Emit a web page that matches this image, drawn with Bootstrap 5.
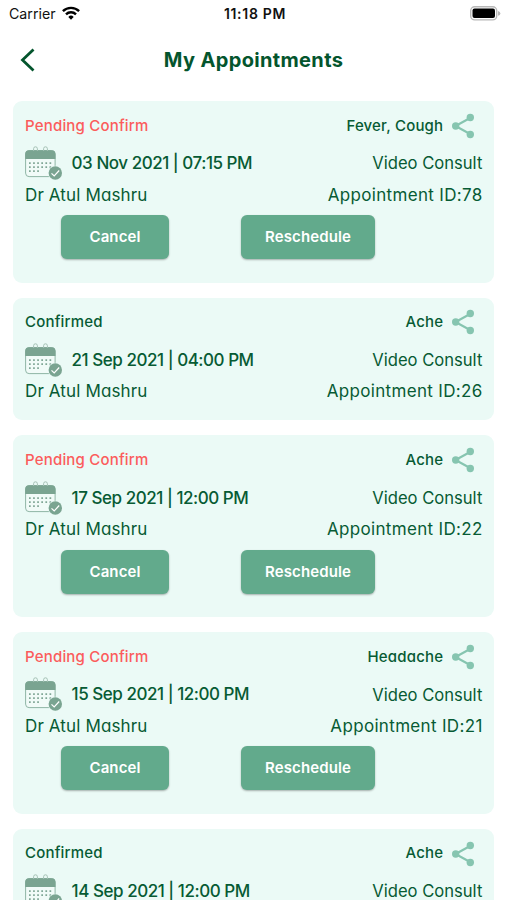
<!DOCTYPE html>
<html lang="en">
<head>
<meta charset="utf-8">
<meta name="viewport" content="width=device-width, initial-scale=1">
<title>My Appointments</title>
<link href="https://cdn.jsdelivr.net/npm/bootstrap@5.3.0/dist/css/bootstrap.min.css" rel="stylesheet">
<style>
  html, body { height: 900px; overflow: hidden; }
  body { background: #fff; color: #075b34; font-family: Inter, "Open Sans", sans-serif; font-feature-settings: "cv11"; }
  .statusbar { height: 28px; color: #111; font-size: 14.2px; padding: 0 6px 0 9px; font-feature-settings: normal; }
  .statusbar > div { flex: 1 1 0; }
  .wifi { margin-left: 6px; margin-top: -2px; }
  .battery { margin-bottom: 2px; }
  .clock { font-weight: 600; font-size: 14px; letter-spacing: .7px; margin-top: -1px; }
  .titlebar { height: 64px; margin-bottom: 1px; padding: 0 20px; }
  .titlebar h1 { font-size: 20px; font-weight: 700; color: #04552d; letter-spacing: .35px; }
  .side { width: 16px; }
  .appts { height: 807px; overflow: hidden; padding: 8px 12.7px 0 13px; gap: 15px; }
  .appt { flex: none; background: #ebfaf6; border: 0; border-radius: 9px; padding: 9.3px 12px 20px; color: inherit; white-space: nowrap; line-height: 1.1; }
  .appt.pending { padding-bottom: 23.4px; }
  .appt.cut { flex: 1 1 0; min-height: 0; overflow: hidden; padding-bottom: 0; border-bottom-left-radius: 0; border-bottom-right-radius: 0; }
  .row-top { height: 31px; font-size: 15px; font-weight: 500; letter-spacing: .19px; }
  .row-when { height: 44.5px; }
  .row-who { height: 18px; font-size: 17px; line-height: 18.5px; }
  .pending .state { color: #fb5c5c; }
  .when { font-size: 17px; font-weight: 500; margin-left: 8.6px; letter-spacing: -.46px; }
  .kind { font-size: 16.6px; }
  .doctor { letter-spacing: .13px; }
  .ident { letter-spacing: .33px; margin-right: -.33px; }
  .share { margin: 0 7px 0 8px; }
  .cal { margin-top: -1px; }
  .actions { margin-top: 11.5px; padding-left: 36px; gap: 72px; }
  .btn-appt { --bs-btn-color: #fff; --bs-btn-bg: #62aa8c; --bs-btn-hover-color: #fff; --bs-btn-hover-bg: #559b7e; height: 44px; border: 0; border-radius: 6px; padding: 0; font-size: 15px; font-weight: 600; letter-spacing: .1px; box-shadow: 0 1px 2px rgba(0,0,0,.3); }
  .btn-cancel { width: 108px; }
  .btn-move { width: 134px; }
</style>
<script src="https://cdn.jsdelivr.net/npm/bootstrap@5.3.0/dist/js/bootstrap.bundle.min.js" defer></script>
</head>
<body>
<svg width="0" height="0" class="position-absolute" aria-hidden="true">
  <symbol id="share" viewBox="0 0 24 26">
    <path d="M20 4.5 4.5 13 20 21.5" fill="none" stroke="#86c5b0" stroke-width="2.200"/>
    <g fill="#86c5b0"><circle cx="19.300" cy="4.500" r="3.700"/><circle cx="4.700" cy="13" r="3.700"/><circle cx="19.300" cy="21.500" r="3.700"/></g>
  </symbol>
  <symbol id="calendar" viewBox="0 0 38 34">
    <rect x=".6" y="4.600" width="29.500" height="26" rx="3.500" fill="#f1fbf8" stroke="#8fb5a5" stroke-width="1"/>
    <path d="M.2 13V8a3.800 3.800 0 0 1 3.800-3.800h22.700A3.800 3.800 0 0 1 30.500 8v5z" fill="#7aa491"/>
    <g fill="none" stroke="#a5c1b5" stroke-width="1"><path d="M8.600 5V2.700a1.900 1.900 0 0 1 3.800 0V5M18.600 5V2.700a1.900 1.900 0 0 1 3.800 0V5"/></g>
    <g stroke="#7fa695" stroke-width="1.700" stroke-dasharray="1.700 2.400"><path d="M4 17.200h23M4 21.200h23M4 25.200h10.500"/></g>
    <circle cx="30.300" cy="27" r="7.300" fill="#ebfaf6"/>
    <circle cx="30.300" cy="27" r="6.700" fill="#7aa491"/>
    <path d="m26.500 27.300 2.700 2.700 5-5.500" fill="none" stroke="#fff" stroke-width="1.200"/>
  </symbol>
</svg>

<header>
  <div class="statusbar d-flex align-items-center">
    <div class="d-flex align-items-center">
      <span>Carrier</span>
      <svg class="wifi" width="18" height="14" viewBox="0 0 18 14"><g fill="none" stroke="#000" stroke-width="2.400"><path d="M.9 5.200a11.500 11.500 0 0 1 16.200 0M4 8.300a7.100 7.100 0 0 1 10 0"/></g><path d="m9 13.700-2.700-2.800a3.900 3.900 0 0 1 5.400 0z"/></svg>
    </div>
    <span class="clock">11:18 PM</span>
    <div class="d-flex justify-content-end">
      <svg class="battery" width="31" height="15" viewBox="0 0 31 15"><rect x=".7" y=".7" width="26" height="13.200" rx="4" fill="#fff" stroke="#b8b8b8" stroke-width="1.400"/><rect x="2.500" y="2.500" width="22.500" height="9.600" rx="2" fill="#000"/><path d="M28 5v4.800q2.400-.7 2.400-2.400T28 5" fill="#b8b8b8"/></svg>
    </div>
  </div>
  <div class="titlebar d-flex align-items-center justify-content-between">
    <svg class="side" width="16" height="24" viewBox="0 0 16 24"><path d="M13.500 1.500 2.500 12l11 10.500" fill="none" stroke="#04552d" stroke-width="2.800"/></svg>
    <h1 class="m-0">My Appointments</h1>
    <span class="side"></span>
  </div>
</header>

<main class="appts d-flex flex-column">
  <article class="card appt pending">
    <div class="row-top d-flex align-items-center"><span class="state me-auto">Pending Confirm</span><span class="why">Fever, Cough</span><svg class="share" width="24" height="26"><use href="#share"/></svg></div>
    <div class="row-when d-flex align-items-center"><svg class="cal" width="38" height="34"><use href="#calendar"/></svg><span class="when me-auto">03 Nov 2021 | 07:15 PM</span><span class="kind">Video Consult</span></div>
    <div class="row-who d-flex justify-content-between"><span class="doctor">Dr Atul Mashru</span><span class="ident">Appointment ID:78</span></div>
    <div class="actions d-flex"><button class="btn btn-appt btn-cancel">Cancel</button><button class="btn btn-appt btn-move">Reschedule</button></div>
  </article>
  <article class="card appt">
    <div class="row-top d-flex align-items-center"><span class="state me-auto">Confirmed</span><span class="why">Ache</span><svg class="share" width="24" height="26"><use href="#share"/></svg></div>
    <div class="row-when d-flex align-items-center"><svg class="cal" width="38" height="34"><use href="#calendar"/></svg><span class="when me-auto">21 Sep 2021 | 04:00 PM</span><span class="kind">Video Consult</span></div>
    <div class="row-who d-flex justify-content-between"><span class="doctor">Dr Atul Mashru</span><span class="ident">Appointment ID:26</span></div>
  </article>
  <article class="card appt pending">
    <div class="row-top d-flex align-items-center"><span class="state me-auto">Pending Confirm</span><span class="why">Ache</span><svg class="share" width="24" height="26"><use href="#share"/></svg></div>
    <div class="row-when d-flex align-items-center"><svg class="cal" width="38" height="34"><use href="#calendar"/></svg><span class="when me-auto">17 Sep 2021 | 12:00 PM</span><span class="kind">Video Consult</span></div>
    <div class="row-who d-flex justify-content-between"><span class="doctor">Dr Atul Mashru</span><span class="ident">Appointment ID:22</span></div>
    <div class="actions d-flex"><button class="btn btn-appt btn-cancel">Cancel</button><button class="btn btn-appt btn-move">Reschedule</button></div>
  </article>
  <article class="card appt pending">
    <div class="row-top d-flex align-items-center"><span class="state me-auto">Pending Confirm</span><span class="why">Headache</span><svg class="share" width="24" height="26"><use href="#share"/></svg></div>
    <div class="row-when d-flex align-items-center"><svg class="cal" width="38" height="34"><use href="#calendar"/></svg><span class="when me-auto">15 Sep 2021 | 12:00 PM</span><span class="kind">Video Consult</span></div>
    <div class="row-who d-flex justify-content-between"><span class="doctor">Dr Atul Mashru</span><span class="ident">Appointment ID:21</span></div>
    <div class="actions d-flex"><button class="btn btn-appt btn-cancel">Cancel</button><button class="btn btn-appt btn-move">Reschedule</button></div>
  </article>
  <article class="card appt cut">
    <div class="row-top flex-shrink-0 d-flex align-items-center"><span class="state me-auto">Confirmed</span><span class="why">Ache</span><svg class="share" width="24" height="26"><use href="#share"/></svg></div>
    <div class="row-when flex-shrink-0 d-flex align-items-center"><svg class="cal" width="38" height="34"><use href="#calendar"/></svg><span class="when me-auto">14 Sep 2021 | 12:00 PM</span><span class="kind">Video Consult</span></div>
  </article>
</main>
</body>
</html>
